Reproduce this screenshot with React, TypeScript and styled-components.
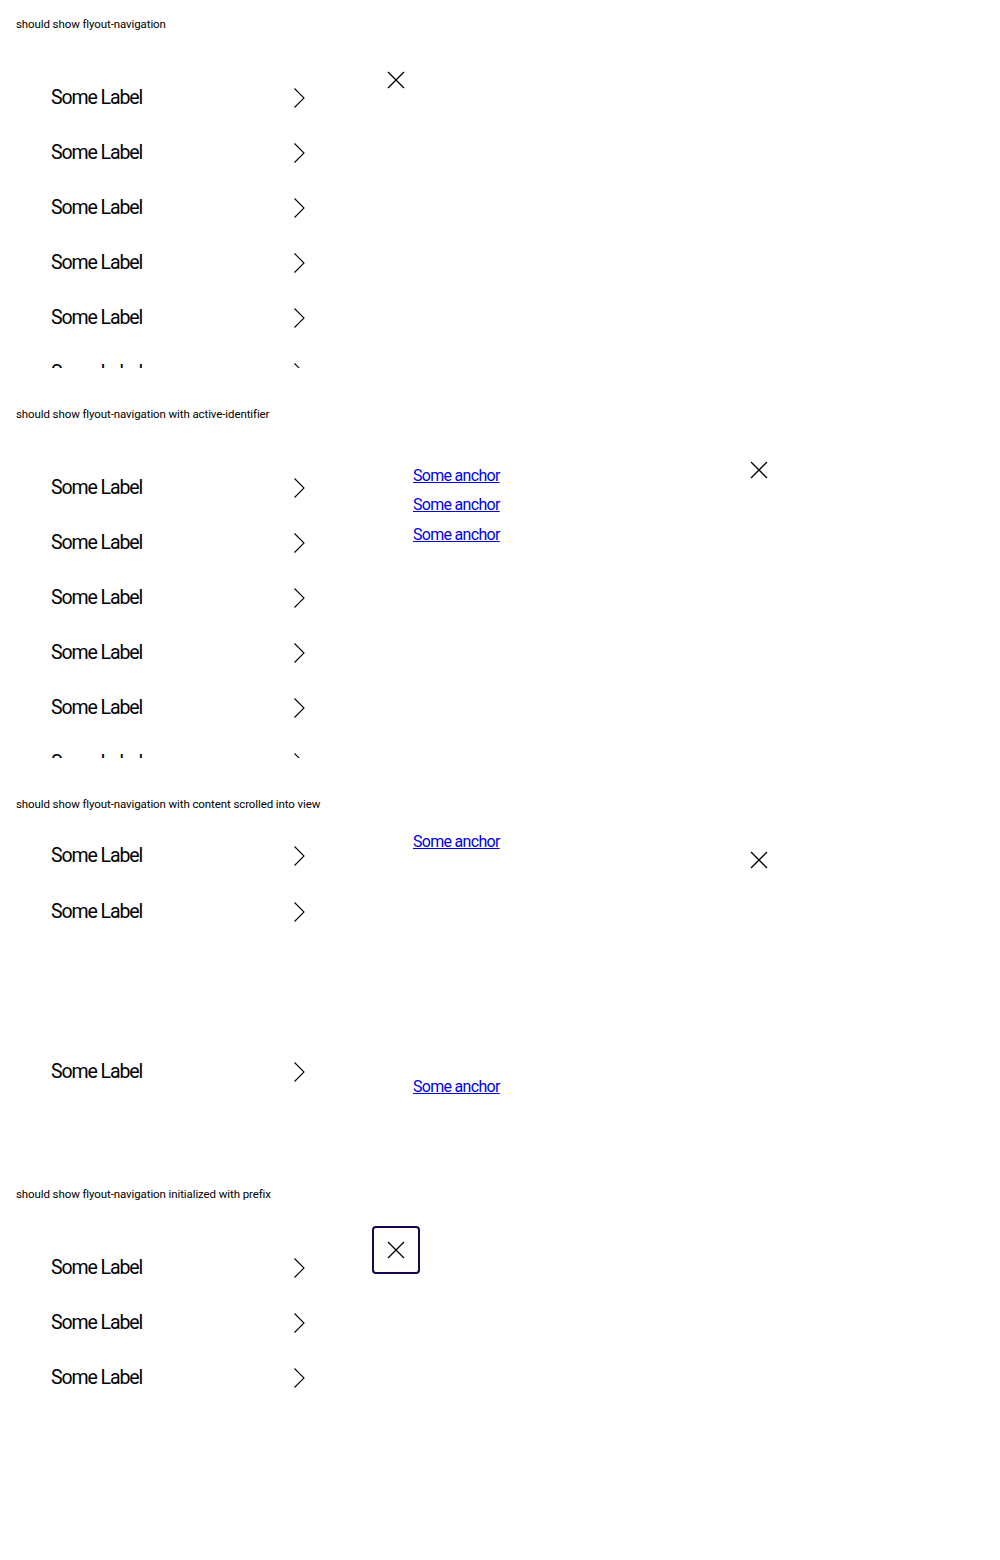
import React from "react";
import styled, { createGlobalStyle } from "styled-components";

const Global = createGlobalStyle`
  html, body { margin: 0; padding: 0; background: #fff; }
  body { font-family: Roboto, "Noto Sans", sans-serif; color: #010205; }
`;

const Page = styled.div`
  display: flex;
  flex-direction: column;
  width: 1000px;
`;

const Section = styled.section`
  height: 390px;
  display: flex;
  flex-direction: column;
`;

const Title = styled.h2`
  margin: 0;
  padding: 16px 16px 0;
  font-size: 11.5px;
  line-height: 16px;
  font-weight: 400;
  letter-spacing: -0.1px;
  color: #000;
`;

const Stage = styled.div<{ $height: number }>`
  position: relative;
  margin-top: 8px;
  height: ${(p) => p.$height}px;
  overflow: hidden;
  display: flex;
  align-items: flex-start;
`;

const Primary = styled.nav<{ $top: number }>`
  position: relative;
  width: 372px;
  flex: 0 0 372px;
  padding-top: ${(p) => p.$top}px;
  display: flex;
  flex-direction: column;
  box-sizing: border-box;
`;

const Item = styled.button<{ $gap?: number }>`
  display: flex;
  align-items: center;
  justify-content: space-between;
  height: 55px;
  width: 254px;
  margin: ${(p) => p.$gap ?? 0}px 0 0 51px;
  padding: 0;
  border: 0;
  background: transparent;
  font-family: Roboto, "Noto Sans", sans-serif;
  font-size: 19.5px;
  letter-spacing: -1.1px;
  color: #010205;
  cursor: pointer;
  text-align: left;
`;

const Secondary = styled.div<{ $top: number }>`
  position: relative;
  width: 411px;
  flex: 0 0 411px;
  height: 100%;
  padding: ${(p) => p.$top}px 0 0 41px;
  box-sizing: border-box;
  display: flex;
  flex-direction: column;
`;

const Anchor = styled.a<{ $gap?: number }>`
  display: block;
  align-self: flex-start;
  margin-top: ${(p) => p.$gap ?? 0}px;
  font-size: 16px;
  line-height: 24px;
  letter-spacing: -0.7px;
  color: #0000ee;
  text-decoration: underline;
`;

const Close = styled.button<{ $left?: number; $focus?: boolean }>`
  position: absolute;
  top: 16px;
  ${(p) => (p.$left !== undefined ? `left: ${p.$left}px;` : "right: 0;")}
  width: 48px;
  height: 48px;
  padding: 0;
  display: flex;
  align-items: center;
  justify-content: center;
  background: transparent;
  box-sizing: border-box;
  border: 2px solid ${(p) => (p.$focus ? "#1a044e" : "transparent")};
  border-radius: 4px;
  cursor: pointer;
`;

const Chevron = () => (
  <svg width="12" height="22" viewBox="0 0 12 22" aria-hidden="true">
    <polyline points="1.5,1.5 11,11 1.5,20.5" fill="none" stroke="#010205" strokeWidth="1.1" />
  </svg>
);

const Cross = () => (
  <svg width="18" height="18" viewBox="0 0 18 18" aria-hidden="true">
    <path d="M1 1 L17 17 M17 1 L1 17" fill="none" stroke="#010205" strokeWidth="1.3" />
  </svg>
);

const NavItem = ({ gap }: { gap?: number }) => (
  <Item $gap={gap}>
    <span>Some Label</span>
    <Chevron />
  </Item>
);

export default function App() {
  return (
    <Page>
      <Global />
      <Section>
        <Title>should show flyout-navigation</Title>
        <Stage $height={328}>
          <Primary $top={30}>
            {[0, 1, 2, 3, 4, 5].map((i) => (
              <NavItem key={i} />
            ))}
          </Primary>
          <Close $left={372} aria-label="Dismiss">
            <Cross />
          </Close>
        </Stage>
      </Section>

      <Section>
        <Title>should show flyout-navigation with active-identifier</Title>
        <Stage $height={328}>
          <Primary $top={30}>
            {[0, 1, 2, 3, 4, 5].map((i) => (
              <NavItem key={i} />
            ))}
          </Primary>
          <Secondary $top={34}>
            <Anchor href="#">Some anchor</Anchor>
            <Anchor href="#" $gap={5}>Some anchor</Anchor>
            <Anchor href="#" $gap={6}>Some anchor</Anchor>
            <Close aria-label="Dismiss">
              <Cross />
            </Close>
          </Secondary>
        </Stage>
      </Section>

      <Section>
        <Title>should show flyout-navigation with content scrolled into view</Title>
        <Stage $height={328}>
          <Primary $top={8}>
            <NavItem />
            <NavItem gap={1} />
            <NavItem gap={105} />
          </Primary>
          <Secondary $top={10}>
            <Anchor href="#">Some anchor</Anchor>
            <Anchor href="#" $gap={221}>Some anchor</Anchor>
            <Close aria-label="Dismiss">
              <Cross />
            </Close>
          </Secondary>
        </Stage>
      </Section>

      <Section>
        <Title>should show flyout-navigation initialized with prefix</Title>
        <Stage $height={328}>
          <Primary $top={30}>
            <NavItem />
            <NavItem />
            <NavItem />
          </Primary>
          <Close $left={372} $focus aria-label="Dismiss">
            <Cross />
          </Close>
        </Stage>
      </Section>
    </Page>
  );
}
